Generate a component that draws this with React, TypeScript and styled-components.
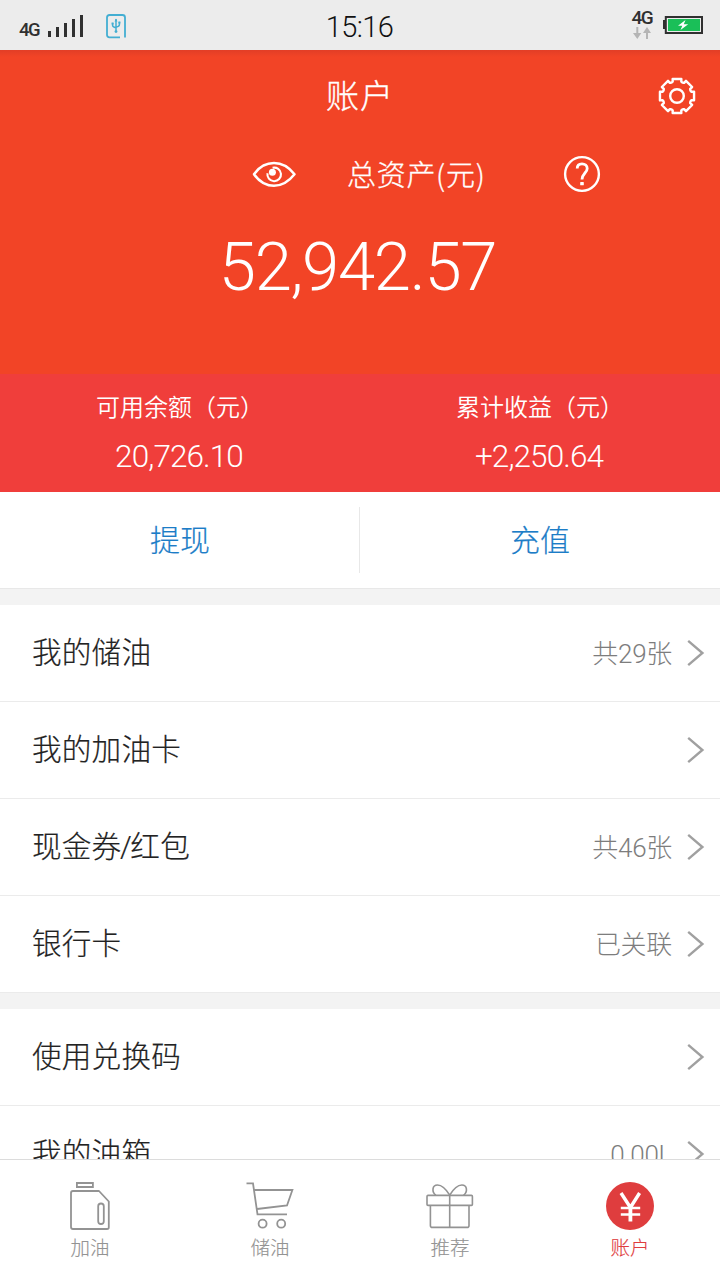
import React from 'react';
import styled, { createGlobalStyle } from 'styled-components';

const GlobalStyle = createGlobalStyle`
  *, *::before, *::after { box-sizing: border-box; }
  body {
    margin: 0;
    background: #fff;
    font-family: 'Roboto', 'Noto Sans CJK SC', sans-serif;
    font-weight: 300;
  }
  svg { display: block; flex: none; }
`;

const Screen = styled.div`
  display: flex;
  flex-direction: column;
  width: 720px;
  height: 1280px;
  overflow: hidden;
  background: #f3f3f3;
`;

const StatusBar = styled.header`
  flex: none;
  display: grid;
  grid-template-columns: 1fr auto 1fr;
  align-items: center;
  height: 50px;
  padding: 0 16px 0 19px;
  background: #ececec;
  color: #303030;
`;

const StatusSide = styled.div<{ $end?: boolean }>`
  display: flex;
  align-items: center;
  justify-content: ${(p) => (p.$end ? 'flex-end' : 'flex-start')};
  height: 50px;
  padding-bottom: ${(p) => (p.$end ? 2 : 0)}px;
`;

const Clock = styled.time`
  font: 300 29px/50px 'Roboto', sans-serif;
  letter-spacing: -0.6px;
  margin-right: 4px;
  padding: 2px 0 0 0;
  color: #111;
`;

const Network = styled.span<{ $size: number; $top?: number }>`
  padding-top: ${(p) => p.$top ?? 0}px;
  font: 500 ${(p) => p.$size}px/16px 'Roboto', sans-serif;
  letter-spacing: -1.6px;
`;

const SignalIcon = styled.svg`
  margin: 0 22px 0 9px;
`;

const DataColumn = styled.div`
  display: flex;
  flex-direction: column;
  align-items: center;
  gap: 1px;
  margin: -1px 11px 0 0;
`;

const Hero = styled.section`
  flex: none;
  height: 324px;
  background: linear-gradient(#e23e26 0, #f24426 7px, #f24426 100%);
  color: #fff;
`;

const TitleBar = styled.div`
  display: grid;
  grid-template-columns: 1fr auto 1fr;
  align-items: center;
  height: 92px;
  padding: 0 24px;
`;

const Title = styled.h1`
  grid-column: 2;
  margin: 0;
  padding-bottom: 4px;
  font: 300 33px/48px 'Noto Sans CJK SC', sans-serif;
  -webkit-text-stroke: 0.35px currentColor;
  letter-spacing: 1px;
`;

const SettingsButton = styled.button`
  justify-self: end;
  padding: 0;
  border: 0;
  background: none;
  color: inherit;
`;

const AssetRow = styled.div`
  display: flex;
  align-items: center;
  height: 64px;
  padding-left: 252px;
`;

const AssetLabel = styled.span`
  width: 138px;
  margin: 0 78px 0 51px;
  padding-bottom: 2px;
  font: 300 29px/42px 'Noto Sans CJK SC', sans-serif;
  -webkit-text-stroke: 0.3px currentColor;
  letter-spacing: 0.7px;
  white-space: nowrap;
`;

const Total = styled.div`
  margin-top: 16px;
  padding-right: 5px;
  font-size: 67px;
  line-height: 90px;
  letter-spacing: -1.3px;
  text-align: center;
`;

const Balances = styled.section`
  flex: none;
  display: grid;
  grid-template-columns: 1fr 1fr;
  height: 118px;
  background: #f03e3b;
  color: #fff;
`;

const Balance = styled.div`
  display: flex;
  flex-direction: column;
  align-items: center;
  padding-top: 14px;
`;

const BalanceLabel = styled.span`
  font: 350 24px/36px 'Noto Sans CJK SC', sans-serif;
  white-space: nowrap;
`;

const BalanceValue = styled.span`
  margin: 13px 2px 0 0;
  font-size: 31.5px;
  line-height: 40px;
  letter-spacing: -0.9px;
`;

const Actions = styled.div`
  flex: none;
  display: grid;
  grid-template-columns: 1fr 1fr;
  align-items: center;
  height: 97px;
  border-bottom: 1px solid #e8e8e8;
  background: #fff;
`;

const Action = styled.button`
  height: 66px;
  padding: 0 0 4px;
  border: 0;
  background: none;
  color: #1c7dc7;
  font: 300 30px/62px 'Noto Sans CJK SC', sans-serif;
  -webkit-text-stroke: 0.2px currentColor;
  & + & { border-left: 1px solid #e8e8e8; margin-left: -1px; }
`;

const Menu = styled.ul<{ $last?: boolean }>`
  flex: ${(p) => (p.$last ? '1 1 0' : 'none')};
  min-height: 0;
  overflow: hidden;
  margin: 16px 0 0;
  padding: 0;
  list-style: none;
  background: #fff;
`;

const MenuRow = styled.li`
  display: flex;
  align-items: center;
  height: 97px;
  padding: 0 15px 0 32px;
  border-bottom: 1px solid #ebebeb;
`;

const MenuLabel = styled.span`
  flex: 1;
  color: #222;
  font: 300 29.6px/44px 'Roboto', 'Noto Sans CJK SC', sans-serif;
  -webkit-text-stroke: 0.2px currentColor;
  letter-spacing: 0.2px;
`;

const Slash = styled.span`
  margin: 0 -1.5px;
`;

const MenuValue = styled.span`
  margin-right: 15px;
  padding-top: 2px;
  color: #7d7d7d;
  font-size: 26px;
  line-height: 40px;
  letter-spacing: -0.3px;
`;

const TabBar = styled.nav`
  flex: none;
  display: grid;
  grid-template-columns: repeat(4, 1fr);
  height: 121px;
  border-top: 1px solid #dcdcdc;
  background: #fff;
`;

const Tab = styled.a<{ $active?: boolean }>`
  display: flex;
  flex-direction: column;
  align-items: center;
  padding-top: 22px;
  color: ${(p) => (p.$active ? '#df3d3e' : '#939393')};
  font: 300 19.5px/28px 'Noto Sans CJK SC', sans-serif;
`;

const TabLabel = styled.span`
  margin-top: 3px;
  -webkit-text-stroke: 0.15px currentColor;
`;

const toothPoints = Array.from({ length: 8 }, (_, i) => {
  const base = (i * Math.PI) / 4 - Math.PI / 2;
  return [
    [-0.36, 14.6], [-0.29, 15], [-0.25, 17.6], [0.25, 17.6], [0.29, 15], [0.36, 14.6],
  ].map(([a, r]) => `${(19 + r * Math.cos(base + a)).toFixed(2)},${(19 + r * Math.sin(base + a)).toFixed(2)}`);
}).flat().join(' ');

const GearIcon = () => (
  <svg width="38" height="38" viewBox="0 0 38 38" fill="none" stroke="currentColor" strokeWidth="2.4" strokeLinejoin="round">
    <polygon points={toothPoints} />
    <circle cx="19" cy="19" r="6.8" />
  </svg>
);

const EyeIcon = () => (
  <svg width="44" height="28" viewBox="0 0 44 28" fill="none" stroke="currentColor" strokeWidth="2.5">
    <path d="M2 14.3C7 7.3 14 3.1 22 3.1S37 7.3 42.5 14.3C37 21.3 30 25.8 22 25.8S7 21.3 2 14.3Z" strokeLinejoin="round" />
    <path d="M20.6 7.8A6.8 6.8 0 1 1 15.5 13.2" strokeWidth="2.1" />
    <circle cx="20.4" cy="12.2" r="3.5" fill="currentColor" stroke="none" />
  </svg>
);

const HelpIcon = () => (
  <svg width="38" height="38" viewBox="0 0 38 38" fill="none" stroke="currentColor" strokeWidth="2.4">
    <circle cx="19" cy="19" r="16.9" />
    <path d="M14.2 13.6C14.2 10.5 16.2 8.8 19 8.8C22 8.8 24.2 10.6 24.2 13.4C24.2 17.8 19 18.4 19 24.6" strokeWidth="2.8" />
    <rect x="17.2" y="26.9" width="3.6" height="3.4" rx="0.6" fill="currentColor" stroke="none" />
  </svg>
);

const UsbIcon = () => (
  <svg width="20" height="25" viewBox="0 0 20 25" fill="none" stroke="#43aed2" strokeWidth="1.8">
    <path d="M14 23.3H3.5Q1 23.3 1 20.8V3.5Q1 1 3.5 1H16.5Q19 1 19 3.5V23.5" />
    <path d="M10 5V18M6.6 9V11.5Q6.6 13 10 13.8M13.4 8V10.8Q13.4 12.4 10 13.2" strokeWidth="1.5" />
    <path d="M10 4.6L8.6 7.4H11.4ZM5.6 8.4H7.6V10.4H5.6ZM12.4 7.4H14.4V9.4H12.4Z" fill="#43aed2" stroke="none" />
    <circle cx="10" cy="17.6" r="1.4" fill="#43aed2" stroke="none" />
  </svg>
);

const BatteryIcon = () => (
  <svg width="41" height="18" viewBox="0 0 41 18">
    <path d="M0 4H3V13H0Z" fill="#303030" />
    <rect x="2.8" y="1" width="36.2" height="16" fill="#ececec" stroke="#303030" strokeWidth="2" />
    <rect x="5" y="3" width="32" height="12" fill="#1abf58" />
    <path d="M22.5 4L15 9.8H19.3L17.5 14L25.2 8.3H20.8Z" fill="#fff" />
  </svg>
);

const Chevron = () => (
  <svg width="18" height="28" viewBox="0 0 18 28" fill="none" stroke="#a0a0a0" strokeWidth="2.4">
    <path d="M1.2 1.8L15.4 14L1.2 26.2" />
  </svg>
);

const CanIcon = () => (
  <svg width="48" height="48" viewBox="0 0 48 48" fill="none" stroke="currentColor" strokeWidth="1.8">
    <path d="M10.9 1H26.9V5H10.9Z" />
    <path d="M7 9H33L42.8 19.5V45.2Q42.8 47 41 47H7Q5 47 5 45V11Q5 9 7 9Z" strokeLinejoin="round" />
    <rect x="32.2" y="21.5" width="5.6" height="20.5" rx="2.8" />
  </svg>
);

const CartIcon = () => (
  <svg width="48" height="48" viewBox="0 0 48 48" fill="none" stroke="currentColor" strokeWidth="1.8">
    <path d="M0.5 1.4H7L11.5 32.3H41M8 8H46.4L41 23.5L11 27" />
    <circle cx="16.6" cy="41.7" r="4" />
    <circle cx="35.2" cy="41.7" r="4" />
  </svg>
);

const GiftIcon = () => (
  <svg width="48" height="48" viewBox="0 0 48 48" fill="none" stroke="currentColor" strokeWidth="1.6">
    <rect x="1" y="13.4" width="45.4" height="10" rx="1" />
    <path d="M4.4 23.4V43.4Q4.4 45.4 6.4 45.4H41Q43 45.4 43 43.4V23.4M23.7 13.4V45.4" />
    <path d="M23.7 13.2C20 7 16 3 11.5 3C6 3 5.6 10 9.8 13.2M23.7 13.2C27.4 7 31.4 3 35.9 3C41.4 3 41.8 10 37.6 13.2" />
  </svg>
);

const YuanIcon = () => (
  <svg width="48" height="48" viewBox="0 0 48 48" fill="none">
    <circle cx="24" cy="24" r="24" fill="currentColor" />
    <path d="M15 11L24.4 25.5L33.6 11" stroke="#fff" strokeWidth="3.4" />
    <path d="M14.8 26H34.2M14.8 32.4H34.2" stroke="#fff" strokeWidth="2.5" />
    <path d="M24.4 24V39.5" stroke="#fff" strokeWidth="3.8" />
  </svg>
);

type Item = { label: React.ReactNode; value?: string };

const oilItems: Item[] = [
  { label: '我的储油', value: '共29张' },
  { label: '我的加油卡' },
  { label: <>现金券<Slash>/</Slash>红包</>, value: '共46张' },
  { label: '银行卡', value: '已关联' },
];

const otherItems: Item[] = [
  { label: '使用兑换码' },
  { label: '我的油箱', value: '0.00L' },
];

const tabs = [
  { label: '加油', Icon: CanIcon },
  { label: '储油', Icon: CartIcon },
  { label: '推荐', Icon: GiftIcon },
  { label: '账户', Icon: YuanIcon, active: true },
];

const MenuList = ({ items, last }: { items: Item[]; last?: boolean }) => (
  <Menu $last={last}>
    {items.map(({ label, value }, index) => (
      <MenuRow key={index}>
        <MenuLabel>{label}</MenuLabel>
        {value && <MenuValue>{value}</MenuValue>}
        <Chevron />
      </MenuRow>
    ))}
  </Menu>
);

export default function App() {
  return (
    <Screen>
      <GlobalStyle />
      <StatusBar>
        <StatusSide>
          <Network $size={18.5} $top={7}>4G</Network>
          <SignalIcon width="36" height="24" viewBox="0 0 36 24" fill="#303030">
            <path d="M0 17H3V23H0ZM8 13H11V23H8ZM16 9H19V23H16ZM24 5H27V23H24ZM32 1H35V23H32Z" />
          </SignalIcon>
          <UsbIcon />
        </StatusSide>
        <Clock>15:16</Clock>
        <StatusSide $end>
          <DataColumn>
            <Network $size={19}>4G</Network>
            <svg width="18" height="12" viewBox="0 0 18 12" fill="#b5b5b5">
              <path d="M3.3 0H5.3V6H8.3L4.3 12L0 6H3.3ZM13 12H15V6H18L14 0L10 6H13Z" />
            </svg>
          </DataColumn>
          <BatteryIcon />
        </StatusSide>
      </StatusBar>
      <Hero>
        <TitleBar>
          <Title>账户</Title>
          <SettingsButton aria-label="设置"><GearIcon /></SettingsButton>
        </TitleBar>
        <AssetRow>
          <EyeIcon />
          <AssetLabel>总资产(元)</AssetLabel>
          <HelpIcon />
        </AssetRow>
        <Total>52,942.57</Total>
      </Hero>
      <Balances>
        <Balance>
          <BalanceLabel>可用余额（元）</BalanceLabel>
          <BalanceValue>20,726.10</BalanceValue>
        </Balance>
        <Balance>
          <BalanceLabel>累计收益（元）</BalanceLabel>
          <BalanceValue>+2,250.64</BalanceValue>
        </Balance>
      </Balances>
      <Actions>
        <Action>提现</Action>
        <Action>充值</Action>
      </Actions>
      <MenuList items={oilItems} />
      <MenuList items={otherItems} last />
      <TabBar>
        {tabs.map(({ label, Icon, active }) => (
          <Tab key={label} $active={active}>
            <Icon />
            <TabLabel>{label}</TabLabel>
          </Tab>
        ))}
      </TabBar>
    </Screen>
  );
}
